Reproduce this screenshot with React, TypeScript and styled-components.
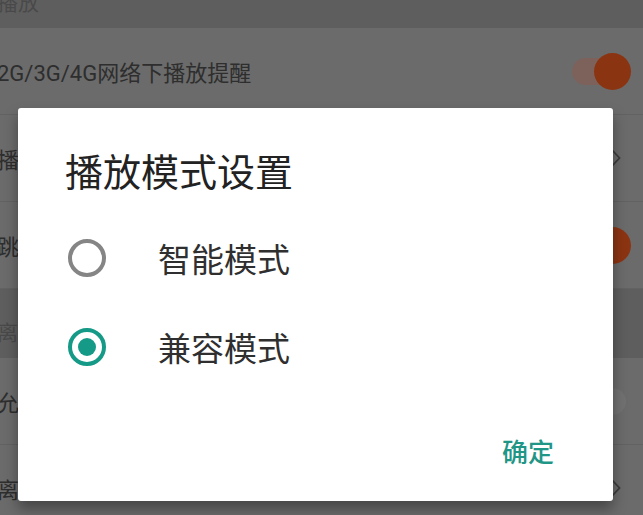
import React, { useState } from 'react';
import styled, { createGlobalStyle } from 'styled-components';

const GlobalStyle = createGlobalStyle`
  html, body {
    margin: 0;
    padding: 0;
    background: #6b6b6b;
    overflow: hidden;
  }

  body {
    font-family: Roboto, 'Noto Sans CJK SC', 'Noto Sans', sans-serif;
  }
`;

const Screen = styled.div`
  position: relative;
  width: 643px;
  height: 515px;
  overflow: hidden;
  background: #b2b2b2;
`;

// the settings list, scrolled a little so the first header is cut off
const Settings = styled.div`
  width: 660px;
  margin: -41px 0 0 -3px;
`;

const SectionHeader = styled.div`
  display: flex;
  align-items: flex-end;
  box-sizing: border-box;
  height: 69px;
  padding-bottom: 14px;

  background: #9d9d9d;
  color: #7b7b7b;
  font-size: 21px;
  line-height: 22px;
`;

const Row = styled.div`
  display: flex;
  align-items: center;
  justify-content: space-between;
  height: 86px;
  padding-right: 31px;

  background: #b2b2b2;
  border-bottom: 1px solid #a3a3a3;
  color: #4d4d4d;
  font-size: 22px;
`;

const Trailing = styled.div`
  display: flex;
  justify-content: flex-end;
  align-items: center;
  width: 54px;
`;

const Chevron = styled.svg`
  width: 10px;
  height: 18px;
  margin-right: 5px;
`;

const Track = styled.div<{ $on: boolean }>`
  position: relative;
  width: 54px;
  height: 27px;
  border-radius: 14px;
  background: ${({ $on }) => ($on ? '#d0a399' : '#bcbcbc')};
`;

const Knob = styled.div<{ $on: boolean }>`
  position: absolute;
  top: -5px;
  left: ${({ $on }) => ($on ? '22px' : '-4px')};
  width: 37px;
  height: 37px;
  border-radius: 50%;
  background: ${({ $on }) => ($on ? '#e8571e' : '#c6c6c6')};
`;

const Scrim = styled.div`
  position: absolute;
  inset: 0;
  display: flex;
  box-sizing: border-box;
  padding: 108px 30px 14px 18px;
  background: rgba(0, 0, 0, 0.4);
`;

const Dialog = styled.div`
  flex: 1;
  display: flex;
  flex-direction: column;
  box-sizing: border-box;
  padding: 40px 0 0 0;

  background: #ffffff;
  border-radius: 3px;
  box-shadow: 0 8px 14px rgba(0, 0, 0, 0.35);
  font-family: 'Noto Sans CJK SC', sans-serif;
`;

const Title = styled.h2`
  margin: 0 0 21px 47px;
  font-size: 38px;
  font-weight: 400;
  line-height: 44px;
  color: #222222;
`;

const Option = styled.label`
  display: flex;
  align-items: center;
  height: 89px;
  padding-left: 50px;
  cursor: pointer;
`;

const Radio = styled.span<{ $checked: boolean }>`
  display: flex;
  align-items: center;
  justify-content: center;
  box-sizing: border-box;
  width: 38px;
  height: 38px;
  border-radius: 50%;
  border: 4px solid ${({ $checked }) => ($checked ? '#159a88' : '#858585')};

  &::after {
    content: '';
    width: 18px;
    height: 18px;
    border-radius: 50%;
    background: ${({ $checked }) => ($checked ? '#159a88' : 'transparent')};
  }
`;

const OptionText = styled.span`
  margin-left: 52px;
  font-size: 33px;
  line-height: 40px;
  color: #2f2f2f;
`;

const Footer = styled.div`
  display: flex;
  justify-content: flex-end;
  margin-top: auto;
  padding: 0 59px 27px 0;
`;

const Button = styled.button`
  height: 48px;
  padding: 0;
  border: none;
  background: none;
  font-family: 'Noto Sans CJK SC', sans-serif;
  font-size: 26px;
  font-weight: 500;
  color: #1f9686;
  cursor: pointer;
`;

const Switch = ({ on }: { on: boolean }) => (
  <Trailing>
    <Track $on={on}>
      <Knob $on={on} />
    </Track>
  </Trailing>
);

const Arrow = () => (
  <Trailing>
    <Chevron viewBox="0 0 10 18">
      <path d="M1.5 1.5 L8.5 9 L1.5 16.5" fill="none" stroke="#646464" strokeWidth="1.8" />
    </Chevron>
  </Trailing>
);

const modes = ['智能模式', '兼容模式'];

const App = () => {
  const [mode, setMode] = useState(1);

  return (
    <Screen>
      <GlobalStyle />
      <Settings>
        <SectionHeader>播放</SectionHeader>
        <Row>
          2G/3G/4G网络下播放提醒
          <Switch on />
        </Row>
        <Row>
          播放模式设置
          <Arrow />
        </Row>
        <Row>
          跳过片头片尾
          <Switch on />
        </Row>
        <SectionHeader>离线缓存</SectionHeader>
        <Row>
          允许2G/3G/4G网络缓存
          <Switch on={false} />
        </Row>
        <Row>
          离线缓存清晰度
          <Arrow />
        </Row>
      </Settings>

      <Scrim>
        <Dialog>
          <Title>播放模式设置</Title>
          {modes.map((label, i) => (
            <Option key={label} onClick={() => setMode(i)}>
              <Radio $checked={mode === i} />
              <OptionText>{label}</OptionText>
            </Option>
          ))}
          <Footer>
            <Button>确定</Button>
          </Footer>
        </Dialog>
      </Scrim>
    </Screen>
  );
};

export default App;
